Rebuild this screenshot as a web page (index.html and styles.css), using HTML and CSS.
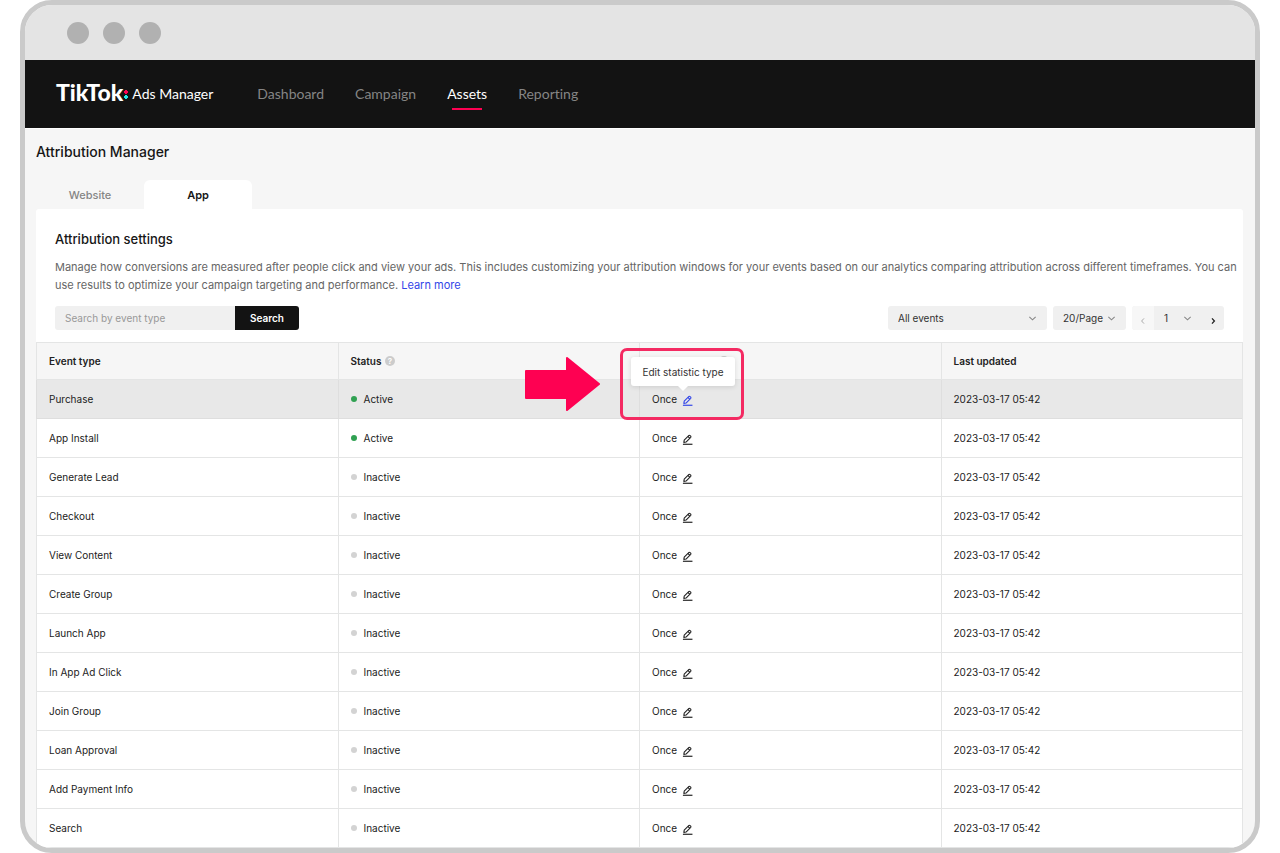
FILE: index.html
```
<!DOCTYPE html>
<html lang="en">
<head>
<meta charset="utf-8">
<title>Attribution Manager</title>
<link rel="stylesheet" href="styles.css">
</head>
<body>
<svg class="sprite" aria-hidden="true">
  <symbol id="pencil" viewBox="0 0 12 12"><path d="M2 9.2 2.4 6.8 7.6 1.6Q8.2 1.2 8.8 1.7L9.5 2.4Q10 3 9.5 3.6L4.4 8.8ZM6.6 2.8 8.4 4.6" fill="none" stroke="currentColor" stroke-width="1.2" stroke-linejoin="round"/><path d="M1 11.2H11.4" stroke="currentColor" stroke-width="1.3"/></symbol>
  <symbol id="down" viewBox="0 0 8 8"><path d="M1.2 2.6 4 5.2 6.8 2.6" fill="none" stroke="currentColor"/></symbol>
</svg>
<div class="window">
  <div class="titlebar"><span></span><span></span><span></span></div>
  <header class="topbar">
    <a class="brand" href="#"><span class="logo">TikTok</span><span class="colon"></span><span class="product">Ads Manager</span></a>
    <nav class="nav">
      <a href="#">Dashboard</a>
      <a href="#">Campaign</a>
      <a href="#" class="current">Assets</a>
      <a href="#">Reporting</a>
    </nav>
  </header>
  <main class="page">
    <h1>Attribution Manager</h1>
    <div class="tabs"><button type="button">Website</button><button type="button" class="selected">App</button></div>
    <section class="card">
      <div class="intro">
        <h2>Attribution settings</h2>
        <p>Manage how conversions are measured after people click and view your ads. This includes customizing your attribution windows for your events based on our analytics comparing attribution across different timeframes. You can use results to optimize your campaign targeting and performance. <a href="#">Learn more</a></p>
        <div class="tools">
          <form class="search"><input type="text" aria-label="Search by event type" placeholder="Search by event type"><button type="button">Search</button></form>
          <div class="filters">
            <label class="select events"><select aria-label="Events"><option>All events</option></select><svg><use href="#down"/></svg></label>
            <label class="select size"><select aria-label="Page size"><option>20/Page</option></select><svg><use href="#down"/></svg></label>
            <div class="pager">
              <button type="button" class="prev" aria-label="Previous" disabled><svg viewBox="0 0 8 8"><path d="M5 1.4 2.6 4 5 6.6" fill="none" stroke="currentColor"/></svg></button>
              <label class="select number"><select aria-label="Page"><option>1</option></select><svg><use href="#down"/></svg></label>
              <button type="button" class="next" aria-label="Next"><svg viewBox="0 0 8 8"><path d="M3 1.4 5.4 4 3 6.6" fill="none" stroke="currentColor" stroke-width="1.3"/></svg></button>
            </div>
          </div>
        </div>
      </div>
      <table class="events-table">
        <thead><tr><th>Event type</th><th>Status <span class="help">?</span></th><th>Statistic type <span class="help">?</span></th><th>Last updated</th></tr></thead>
        <tbody>
          <tr class="hovered"><td>Purchase</td><td><span class="dot on"></span>Active</td>
            <td class="anchor">Once <button type="button" class="edit" aria-label="Edit"><svg><use href="#pencil"/></svg></button>
              <div class="tip" role="tooltip">Edit statistic type</div>
              <div class="callout"></div>
              <svg class="arrow" viewBox="0 0 76 58"><path d="M2 16H43V3L75 29 43 55V43H2Z" fill="#fe0152" stroke="#fe0152" stroke-width="2" stroke-linejoin="round"/></svg>
            </td><td>2023-03-17 05:42</td></tr>
          <tr><td>App Install</td><td><span class="dot on"></span>Active</td><td>Once <button type="button" class="edit" aria-label="Edit"><svg><use href="#pencil"/></svg></button></td><td>2023-03-17 05:42</td></tr>
          <tr><td>Generate Lead</td><td><span class="dot"></span>Inactive</td><td>Once <button type="button" class="edit" aria-label="Edit"><svg><use href="#pencil"/></svg></button></td><td>2023-03-17 05:42</td></tr>
          <tr><td>Checkout</td><td><span class="dot"></span>Inactive</td><td>Once <button type="button" class="edit" aria-label="Edit"><svg><use href="#pencil"/></svg></button></td><td>2023-03-17 05:42</td></tr>
          <tr><td>View Content</td><td><span class="dot"></span>Inactive</td><td>Once <button type="button" class="edit" aria-label="Edit"><svg><use href="#pencil"/></svg></button></td><td>2023-03-17 05:42</td></tr>
          <tr><td>Create Group</td><td><span class="dot"></span>Inactive</td><td>Once <button type="button" class="edit" aria-label="Edit"><svg><use href="#pencil"/></svg></button></td><td>2023-03-17 05:42</td></tr>
          <tr><td>Launch App</td><td><span class="dot"></span>Inactive</td><td>Once <button type="button" class="edit" aria-label="Edit"><svg><use href="#pencil"/></svg></button></td><td>2023-03-17 05:42</td></tr>
          <tr><td>In App Ad Click</td><td><span class="dot"></span>Inactive</td><td>Once <button type="button" class="edit" aria-label="Edit"><svg><use href="#pencil"/></svg></button></td><td>2023-03-17 05:42</td></tr>
          <tr><td>Join Group</td><td><span class="dot"></span>Inactive</td><td>Once <button type="button" class="edit" aria-label="Edit"><svg><use href="#pencil"/></svg></button></td><td>2023-03-17 05:42</td></tr>
          <tr><td>Loan Approval</td><td><span class="dot"></span>Inactive</td><td>Once <button type="button" class="edit" aria-label="Edit"><svg><use href="#pencil"/></svg></button></td><td>2023-03-17 05:42</td></tr>
          <tr><td>Add Payment Info</td><td><span class="dot"></span>Inactive</td><td>Once <button type="button" class="edit" aria-label="Edit"><svg><use href="#pencil"/></svg></button></td><td>2023-03-17 05:42</td></tr>
          <tr><td>Search</td><td><span class="dot"></span>Inactive</td><td>Once <button type="button" class="edit" aria-label="Edit"><svg><use href="#pencil"/></svg></button></td><td>2023-03-17 05:42</td></tr>
        </tbody>
      </table>
    </section>
  </main>
</div>
</body>
</html>
```

FILE: styles.css
```
* { box-sizing: border-box; }
body { margin: 0; background: #fff; color: #222; font: 10px/16px Inter, "Liberation Sans", sans-serif; }
button, input, select { font: inherit; color: inherit; border: 0; padding: 0; margin: 0; background: none; }
a { text-decoration: none; }
.sprite { position: absolute; width: 0; height: 0; }
.window { margin: 0 20px; border: 5px solid #cacaca; border-radius: 32px; overflow: hidden; background: #f6f6f6; }
.titlebar { height: 55px; padding: 0 42px; display: flex; align-items: center; gap: 14px; background: #e4e4e4; }
.titlebar span { width: 22px; height: 22px; border-radius: 50%; background: #b1b1b1; }
.topbar { height: 69px; padding: 0 31px; display: flex; align-items: center; gap: 44px; background: #131313; border-bottom: 1px solid #fff; font: 14px/20px Lato, sans-serif; font-variant-ligatures: none; }
.brand { display: flex; align-items: center; color: #fff; }
.logo { font-size: 23px; font-weight: 900; padding-bottom: 4px; }
.colon { width: 4px; height: 9px; margin: 0 4px 0 1px; background: radial-gradient(circle at 2px 2px, #fe0152 2px, transparent 2px), radial-gradient(circle at 2px 7px, #25e5e8 2px, transparent 2px); }
.nav { display: flex; gap: 31px; }
.nav a { position: relative; color: #858585; }
.nav .current { color: #fff; }
.nav .current::after { content: ""; position: absolute; left: 5px; right: 5px; bottom: -6px; height: 2px; background: #fe0152; }
.page { padding: 13px 12px 0 11px; }
h1 { margin: 0; font-size: 14px; line-height: 20px; font-weight: 500; color: #161616; }
.tabs { display: flex; margin-top: 18px; }
.tabs button { width: 108px; height: 29px; font-size: 11px; font-weight: 500; color: #858585; border-radius: 6px 6px 0 0; }
.tabs .selected { background: #fff; color: #161616; font-weight: 600; }
.card { background: #fff; border-radius: 3px 3px 0 0; }
.intro { padding: 20px 4px 12px 19px; }
h2 { margin: 0; font-size: 13px; line-height: 20px; font-weight: 500; color: #161616; }
.intro p { margin: 9px 0 12px; font-size: 11px; line-height: 18px; color: #666; }
.intro p a { color: #3346e8; }
.tools, .filters, .search, .pager { display: flex; }
.tools { justify-content: space-between; padding-right: 15px; }
.filters { gap: 6px; }
.search input { width: 180px; height: 24px; padding: 0 10px; background: #f0f0f0; border-radius: 3px 0 0 3px; }
.search input::placeholder { color: #999; opacity: 1; }
.search button { width: 64px; height: 24px; background: #131313; color: #fff; font-weight: 600; border-radius: 0 3px 3px 0; }
.select { display: flex; align-items: center; height: 24px; padding: 0 10px; background: #f0f0f0; border-radius: 3px; color: #333; }
.select select { flex: 1; min-width: 0; appearance: none; }
.select svg { width: 9px; height: 9px; color: #888; }
.events { width: 159px; }
.size { width: 73px; }
.pager { background: #f0f0f0; border-radius: 3px; overflow: hidden; }
.pager button { width: 22px; height: 24px; padding-top: 6px; }
.pager button svg { width: 8px; height: 8px; }
.pager .prev { background: #f7f7f7; color: #aaa; }
.pager .number { width: 48px; }
.events-table { width: 100%; table-layout: fixed; border-collapse: separate; border-spacing: 0; border-right: 1px solid #e4e5e5; }
th, td { padding: 0 12px; text-align: left; border-left: 1px solid #e4e5e5; border-bottom: 1px solid #e4e5e5; }
th { height: 38px; background: #f6f6f6; border-top: 1px solid #e4e5e5; font-weight: 600; }
td { height: 39px; }
.hovered td { background: #e8e8e8; border-color: #dedede; }
.help { display: inline-block; width: 10px; height: 10px; margin-left: 1px; border-radius: 50%; background: #ccc; color: #fff; font-size: 8px; line-height: 10px; text-align: center; vertical-align: 1px; }
.dot { display: inline-block; width: 6px; height: 6px; margin-right: 7px; border-radius: 50%; background: #d3d3d3; vertical-align: 1px; }
.on { background: #30a152; }
.edit { width: 11px; height: 11px; margin-left: 2px; vertical-align: -3px; }
.edit svg { display: block; width: 11px; height: 11px; }
.hovered .edit { color: #3346e8; }
.anchor { position: relative; }
.tip { position: absolute; left: -9px; top: -23px; width: 104px; padding: 7px 0 6px; text-align: center; background: #fff; border-radius: 3px; box-shadow: 0 1px 5px rgba(0,0,0,.12); color: #333; }
.tip::after { content: ""; position: absolute; left: 47px; bottom: -5px; border: solid transparent; border-width: 0 5px; border-top: 5px solid #fff; }
.callout { position: absolute; left: -20px; top: -32px; width: 124px; height: 72px; border: 3px solid #f42a62; border-radius: 7px; }
.arrow { position: absolute; left: -116px; top: -25px; width: 76px; height: 58px; }
```
